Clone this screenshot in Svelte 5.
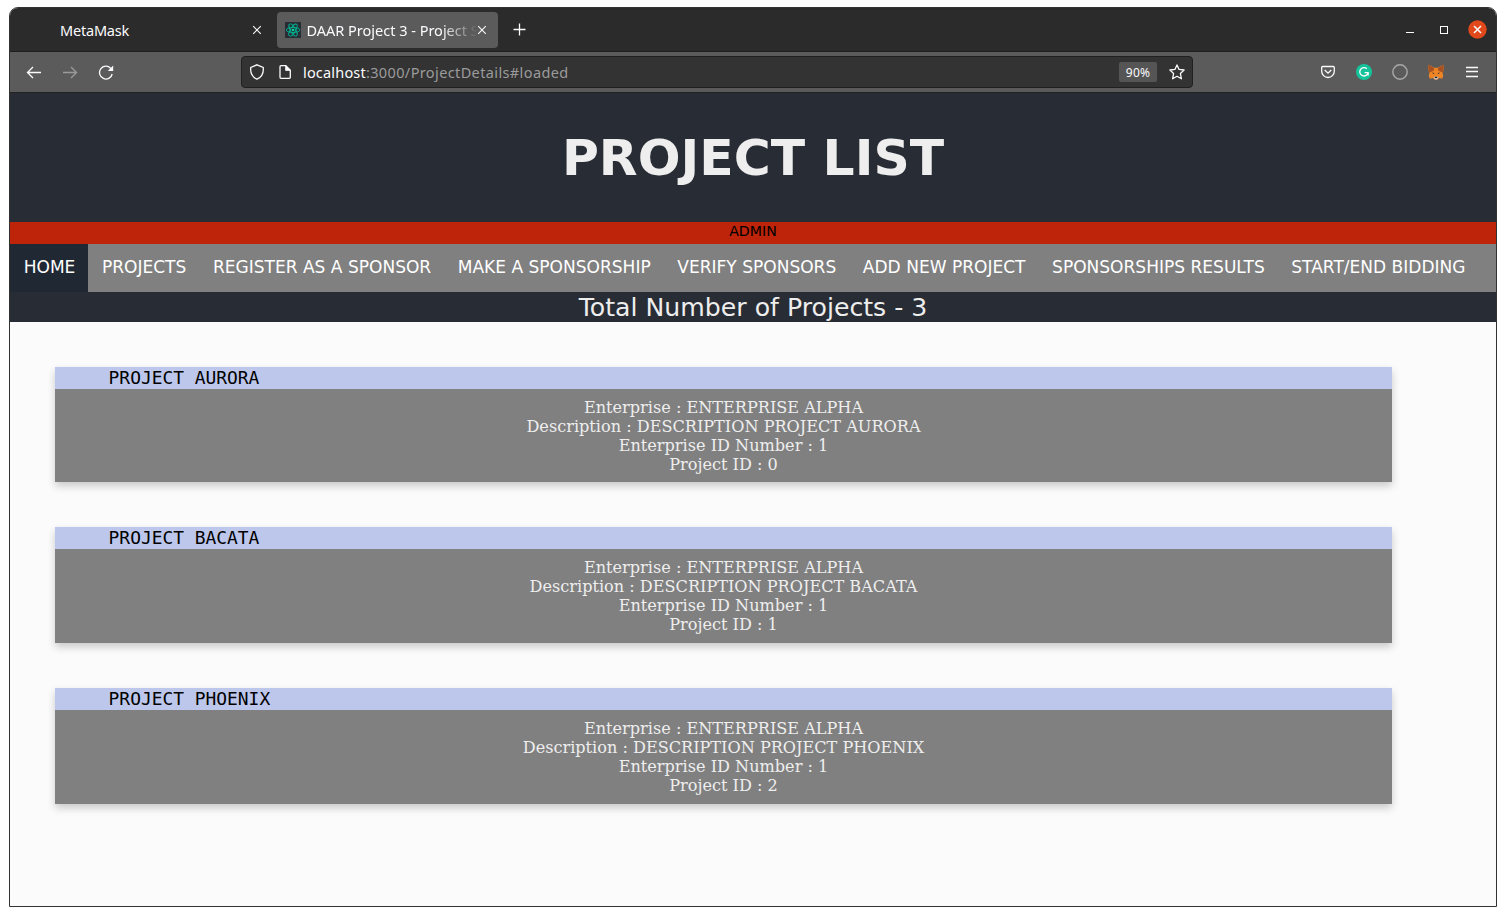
<script>
  const links = [
    'HOME', 'PROJECTS', 'REGISTER AS A SPONSOR', 'MAKE A SPONSORSHIP',
    'VERIFY SPONSORS', 'ADD NEW PROJECT', 'SPONSORSHIPS RESULTS', 'START/END BIDDING'
  ];
  const projects = ['AURORA', 'BACATA', 'PHOENIX'];
</script>

<div class="window">
  <div class="tabs">
    <div class="tab first">
      <span class="title meta">MetaMask</span>
      <svg class="close" width="10" height="10" viewBox="0 0 10 10"><path d="M1.2 1.2 8.8 8.8M8.8 1.2 1.2 8.8" /></svg>
    </div>
    <div class="tab active">
      <svg class="favicon" width="16" height="16" viewBox="0 0 16 16">
        <rect width="16" height="16" fill="#282c34" stroke="none" />
        <g fill="none" stroke="#00b894" stroke-width=".9">
          <ellipse cx="8" cy="8" rx="6.8" ry="2.6" />
          <ellipse cx="8" cy="8" rx="6.8" ry="2.6" transform="rotate(60 8 8)" />
          <ellipse cx="8" cy="8" rx="6.8" ry="2.6" transform="rotate(120 8 8)" />
        </g>
        <circle cx="8" cy="8" r="1.3" fill="#00d8a0" stroke="none" />
      </svg>
      <span class="title fade">DAAR Project 3 - Project S</span>
      <svg class="close" width="10" height="10" viewBox="0 0 10 10"><path d="M1.2 1.2 8.8 8.8M8.8 1.2 1.2 8.8" /></svg>
    </div>
    <svg class="plus" width="13" height="13" viewBox="0 0 13 13"><path d="M6.5 .5V12.5M.5 6.5H12.5" /></svg>
    <div class="controls">
      <svg width="8" height="10" viewBox="0 0 8 10"><path d="M0 7.5H8" /></svg>
      <svg width="8" height="8" viewBox="0 0 8 8"><rect x=".5" y=".5" width="7" height="7" /></svg>
      <svg width="19" height="19" viewBox="0 0 19 19"><circle cx="9.5" cy="9.5" r="9.2" fill="#e2491a" stroke="none" /><path d="M6 6 13 13M13 6 6 13" stroke-width="1.5" /></svg>
    </div>
  </div>

  <div class="toolbar">
    <div class="history">
      <svg width="16" height="16" viewBox="0 0 16 16"><path d="M15 8.5H1.5M7 3 1.5 8.5 7 14" /></svg>
      <svg class="off" width="16" height="16" viewBox="0 0 16 16"><path d="M1 8.5H14.5M9 3 14.5 8.5 9 14" /></svg>
      <svg width="16" height="16" viewBox="0 0 16 16"><path d="M14.2 10A6.4 6.4 0 1 1 12.6 4.2L14 5.6" /><path d="M15.2 1.6V7H9.8Z" fill="#fbfbfe" stroke="none" /></svg>
    </div>
    <div class="address">
      <svg width="16" height="16" viewBox="0 0 16 16"><path d="M8 .8 14.2 3.4C14.8 8.3 12.8 13 8 15.2 3.2 13 1.2 8.3 1.8 3.4Z" /></svg>
      <svg class="page-icon" width="14" height="16" viewBox="0 0 14 16"><path d="M3 1.7H7.8L12.3 6.2V13.3Q12.3 14.3 11.3 14.3H3Q2 14.3 2 13.3V2.7Q2 1.7 3 1.7Z" /><path d="M7.6 1.5V6.4H12.5Z" fill="#fbfbfe" stroke-width=".8" /></svg>
      <span class="url"><b>localhost</b>:3000/ProjectDetails#loaded</span>
      <span class="zoom">90%</span>
      <svg width="16" height="16" viewBox="0 0 16 16"><path d="M8 .9 10.1 5.4 15.1 6 11.4 9.5 12.4 14.8 8 12.3 3.6 14.8 4.6 9.5 .9 6 5.9 5.4Z" stroke-linejoin="round" /></svg>
    </div>
    <div class="extensions">
      <svg width="16" height="16" viewBox="0 0 16 16"><path d="M2.8 2.5H13.2Q14.3 2.5 14.3 3.6V7.2A6.3 6.3 0 0 1 1.7 7.2V3.6Q1.7 2.5 2.8 2.5Z" /><path d="M4.7 6 8 9.2 11.3 6" /></svg>
      <svg width="16" height="16" viewBox="0 0 16 16"><circle cx="8" cy="8" r="8" fill="#15c39a" stroke="none" /><path d="M10.8 4.7A4.2 4.2 0 1 0 12.1 8.6H8.6M12.1 8.5V11.5" stroke-width="1.4" /></svg>
      <svg class="ring" width="16" height="16" viewBox="0 0 16 16"><circle cx="8" cy="8" r="7.2" /></svg>
      <svg width="16" height="16" viewBox="0 0 16 16">
        <g stroke="none">
          <path d="M.8.7 6.2 3.7H9.8L15.2.7 15.8 5.5 14.5 9 15.3 11.5 14.2 14.7 11 14 9.3 15.6H6.7L5 14 1.8 14.7.7 11.5 1.5 9 .2 5.5Z" fill="#ef8424" />
          <path d="M.8.7 6.2 4.2 5.6 6.7 1.5 8.5.3 5.5ZM15.2.7 9.8 4.2 10.4 6.7 14.5 8.5 15.7 5.5Z" fill="#a75220" />
          <path d="M3.9 8.5 6.2 9.1 6 10.2ZM12.1 8.5 9.8 9.1 10 10.2Z" fill="#35333b" />
          <path d="M5.4 13.5 6.7 12.4H9.3L10.6 13.5 9.3 15.5H6.7Z" fill="#d5bfb2" />
          <path d="M6.8 12.7H9.2V14H6.8Z" fill="#201a1a" />
        </g>
      </svg>
      <svg width="16" height="16" viewBox="0 0 16 16"><path d="M2 3.5H14M2 7.5H14M2 12.5H14" /></svg>
    </div>
  </div>

  <header><h1>PROJECT LIST</h1></header>
  <div class="admin">ADMIN</div>
  <nav>
    {#each links as link, i}
      <a href="#loaded" class:current={i === 0}>{link}</a>
    {/each}
  </nav>
  <div class="total">Total Number of Projects - 3</div>

  <main>
    {#each projects as name, i}
      <article>
        <h2>PROJECT {name}</h2>
        <div class="details">
          <div>Enterprise : ENTERPRISE ALPHA</div>
          <div>Description : DESCRIPTION PROJECT {name}</div>
          <div>Enterprise ID Number : 1</div>
          <div>Project ID : {i}</div>
        </div>
      </article>
    {/each}
  </main>
</div>

<style>
  :global(body) { margin: 0; background: #fff; }
  * { box-sizing: border-box; }
  svg { display: block; flex: none; fill: none; stroke: #fbfbfe; stroke-width: 1.3; }
  .window {
    width: 1488px; height: 900px; margin: 7px 0 0 9px; overflow: hidden;
    border: 1px solid #333; border-radius: 9px 9px 0 0; background: #fbfbfb;
    font-family: "DejaVu Sans", sans-serif;
  }
  .tabs {
    height: 44px; display: flex; align-items: center; padding: 0 9px 0 0;
    background: #2b2b2b; border-bottom: 1px solid #1f1f1f; color: #fbfbfe;
    font: 14.5px/20px "Noto Sans", sans-serif;
  }
  .tab { display: flex; align-items: center; height: 36px; }
  .tab .close { stroke-width: 1.1; }
  .first { width: 267px; padding: 0 15px 0 50px; justify-content: space-between; }
  .active { width: 221px; padding: 0 11px 0 8px; background: #5b5b5b; border-radius: 4px; }
  .title { white-space: nowrap; }
  .meta { letter-spacing: -.2px; }
  .fade {
    width: 170px; margin: 0 1px 0 5px; padding-left: .4px;
    mask-image: linear-gradient(90deg, #000 135px, transparent 172px);
  }
  .plus { margin-left: 15px; }
  .controls { margin-left: auto; display: flex; align-items: center; gap: 26px; }
  .controls svg:not(:last-child) { stroke-width: 1; }
  .controls svg:last-child { margin-left: -6px; }
  .toolbar {
    height: 41px; display: flex; align-items: center; padding: 0 16px;
    background: #5b5b5b; border-bottom: 1px solid #232323;
  }
  .history { display: flex; gap: 20px; width: 215px; }
  .off { opacity: .4; }
  .ring { stroke: #a9a9a9; stroke-width: 1.4; }
  .address {
    width: 952px; height: 32px; display: flex; align-items: center; padding: 0 7px;
    background: #333; border: 1px solid #202020; border-radius: 4px;
  }
  .page-icon { margin-left: 13px; }
  .url { margin-left: 11px; font: 14.5px/20px "Noto Sans", sans-serif; letter-spacing: .38px; color: #9b9b9c; }
  .url b { font-weight: 400; letter-spacing: .18px; color: #fbfbfe; }
  .zoom {
    margin: 0 12px 0 auto; width: 38px; height: 20px; border-radius: 2px; text-align: center;
    background: #555; color: #fbfbfe; font: 12px/21px "Noto Sans", sans-serif; letter-spacing: .2px;
  }
  .extensions { margin-left: auto; display: flex; gap: 20px; }
  header { height: 129px; background: #282c34; color: #eee; text-align: center; }
  h1 { margin: 0; font-size: 50.4px; line-height: 130px; font-weight: 700; }
  .admin { height: 22px; background: #bd240a; color: #000; text-align: center; font-size: 14.2px; line-height: 18px; }
  nav { height: 48px; display: flex; background: #808080; }
  nav a { padding: 0 12.9px 0 13.7px; color: #fff; text-decoration: none; font-size: 17.05px; line-height: 46px; white-space: nowrap; }
  nav .current { background: #202833; }
  .total { height: 30px; background: #282c34; color: #eee; text-align: center; font-size: 25.2px; line-height: 32px; }
  main { padding: 45px 104px 0 45px; display: grid; gap: 45px; }
  article { height: 115.4px; background: #808080; box-shadow: 0 4px 8px rgba(0, 0, 0, .2); }
  article:last-child { height: 116px; }
  h2 { margin: 0; height: 22px; padding-left: 53.6px; background: #bdc7eb; color: #000; font: 17.9px/22px "DejaVu Sans Mono", monospace; }
  .details { padding-top: 9px; color: #eee; text-align: center; font: 16.12px/19px "DejaVu Serif", serif; }
</style>
